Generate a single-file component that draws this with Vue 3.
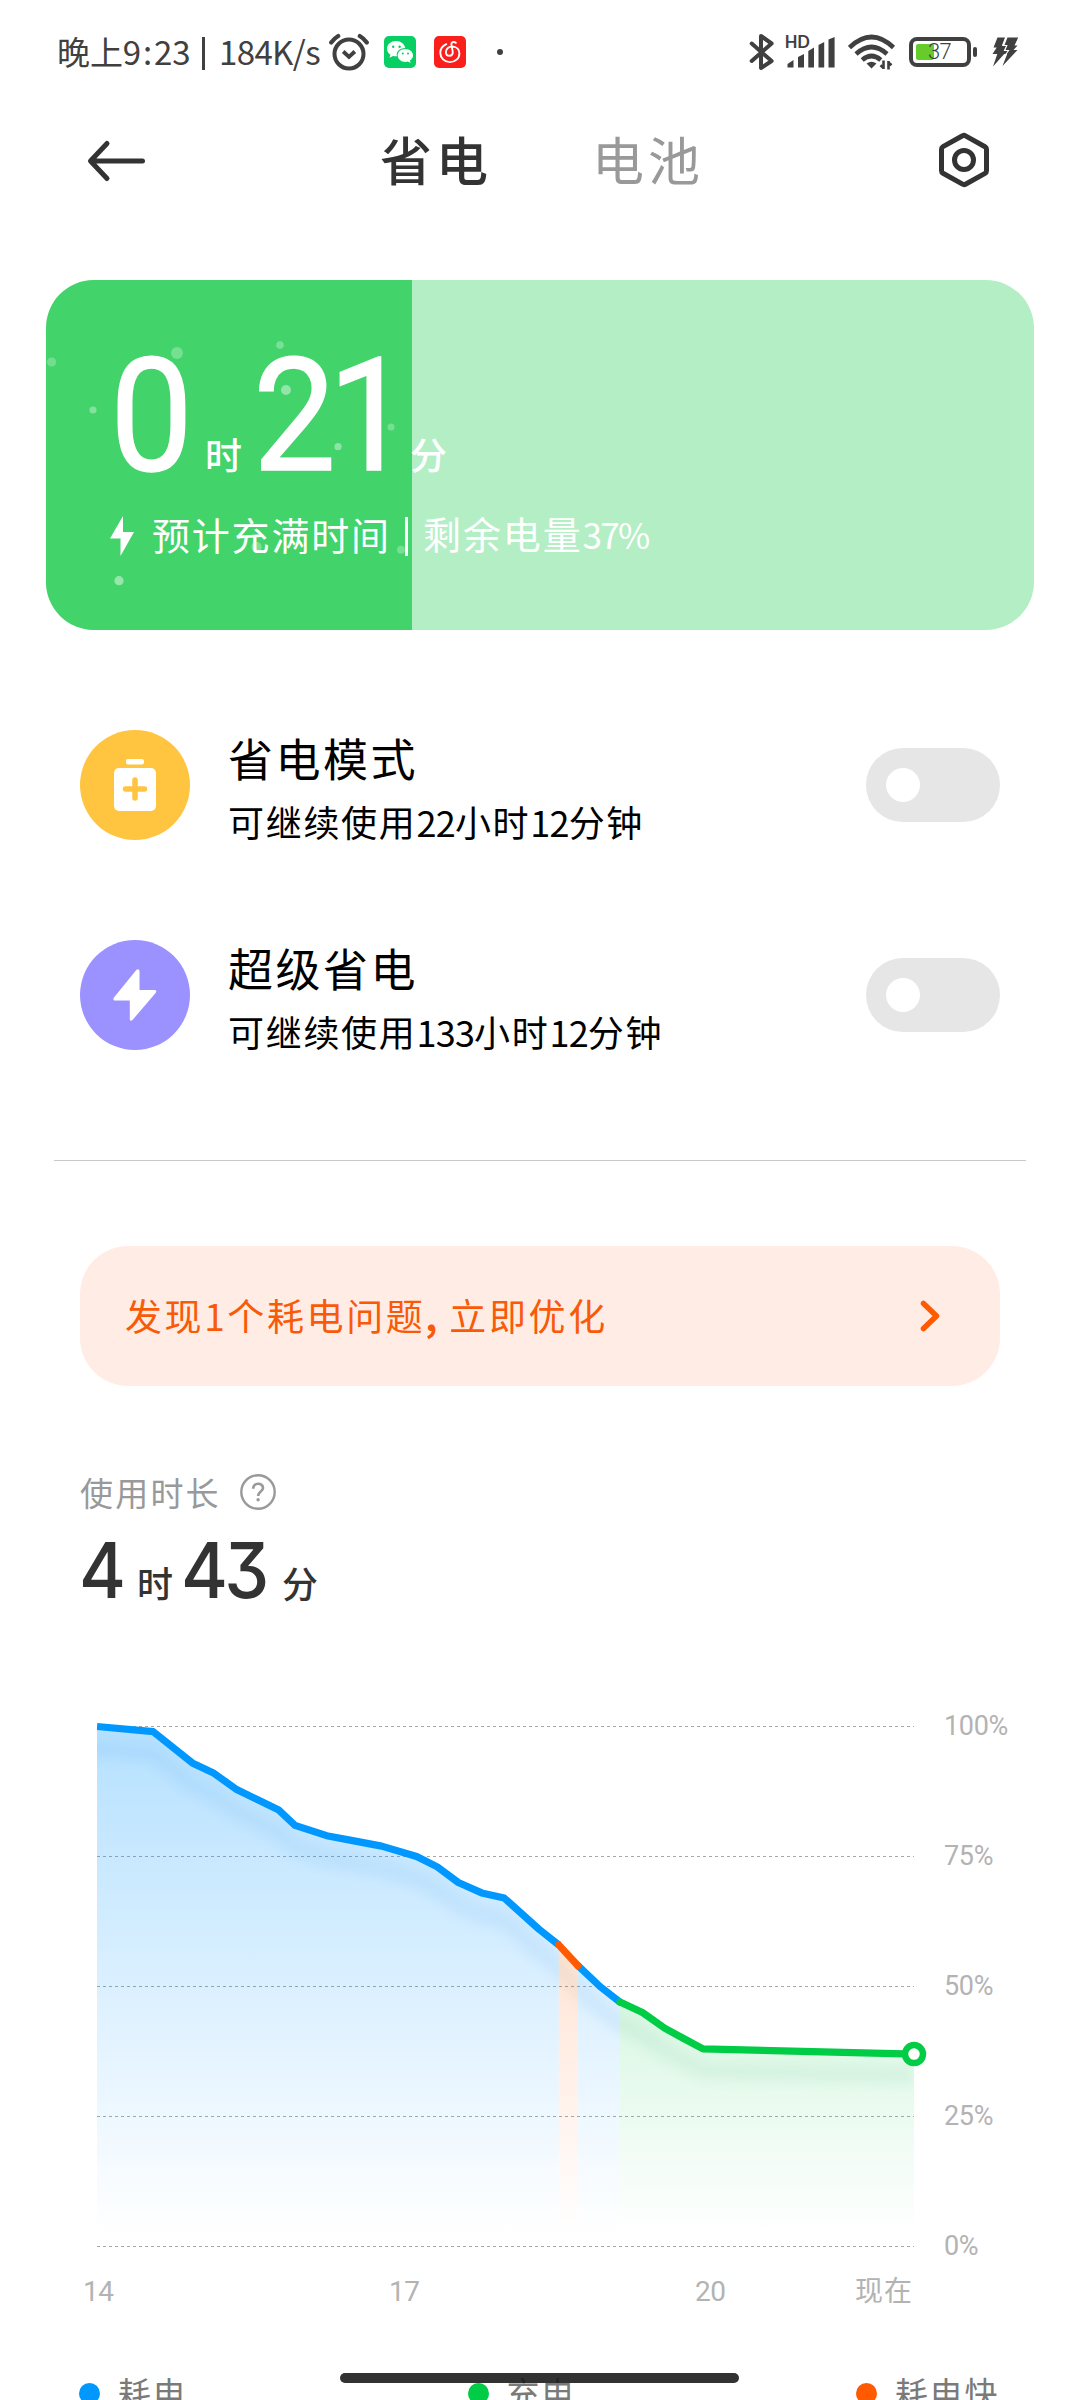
<script setup>
const LEFT = 97
const TOP = 26.5
const STEP = 5.2

const modes = [
  { key: 'saver', title: '省电模式', note: ['可继续使用', '22', '小时', '12', '分钟'] },
  { key: 'super', title: '超级省电', note: ['可继续使用', '133', '小时', '12', '分钟'] },
]

const bubbles = [
  [5.6, 82, 4.6, 0.25], [131, 73, 6, 0.27], [234, 65, 3.8, 0.3], [240, 110, 5, 0.42],
  [47, 130, 3.6, 0.35], [292, 166.7, 3.6, 0.4], [345, 147, 3.6, 0.27],
  [73, 300.7, 4.6, 0.45], [210.5, 267, 5.2, 0.3], [355, 269.7, 4, 0.27],
]

const levels = [100, 75, 50, 25, 0]
const segments = [
  {
    id: 'a', color: '#0097ff', shade: '#1482dc', alpha: 0.29,
    points: [[97, 100], [153.3, 99], [192.3, 93], [214, 91], [235.7, 88], [256.7, 86], [278.3, 84], [295, 81], [326.7, 79], [354, 78], [381.7, 77], [416.7, 75], [437.3, 73], [458.3, 70], [481.7, 68], [504.3, 67], [539, 61], [558.7, 58]],
  },
  { id: 'c', color: '#0097ff', shade: '#1482dc', alpha: 0.29, points: [[578, 54], [600, 50], [620, 47]] },
  { id: 'b', color: '#ff5a00', shade: '#5a8a50', alpha: 0.29, points: [[558.7, 58], [578, 54]] },
  { id: 'd', color: '#00cc46', shade: '#28a064', alpha: 0.33, points: [[620, 47], [642.5, 45], [664.6, 42], [683.6, 40], [703, 38], [914, 37]] },
]
const y = (v) => TOP + (100 - v) * STEP
const toPath = (pts) => pts.map(([px, v], i) => `${i ? 'L' : 'M'}${px - LEFT} ${y(v)}`).join(' ')
const toArea = (pts) => `${toPath(pts)} L${pts[pts.length - 1][0] - LEFT} ${y(0)} L${pts[0][0] - LEFT} ${y(0)} Z`
const bridge = [segments[0].points.at(-1), segments[1].points[0]]
const whole = toPath([[60, 100], ...segments[0].points, ...bridge, ...segments[1].points, ...segments[3].points])
</script>

<template>
  <div class="screen">
    <header class="status">
      <span class="clock">晚上9<i class="colon">:</i>23<i class="bar"></i><span class="speed">184K/s</span></span>
      <svg class="alarm" width="40" height="40" viewBox="0 0 40 40" fill="none" stroke="#404040" stroke-linecap="round">
        <circle cx="20" cy="22" r="14.500" stroke-width="4" />
        <path d="M14.200 19.500l5.800 5.500 5.800-5.500" stroke-width="3.800" stroke-linecap="butt" />
        <path d="M2.200 10.500Q5 6.500 9.200 4M37.800 10.500Q35 6.500 30.800 4" stroke-width="4.200" />
      </svg>
      <svg class="wechat" width="32" height="32" viewBox="0 0 32 32">
        <rect width="32" height="32" rx="5" fill="#06cf63" />
        <path fill="#fff" d="M12.300 5C7 5 3 8.400 3 12.700c0 2.500 1.300 4.600 3.400 6l-.9 3 3.500-1.800c1.100.3 2.200.4 3.300.4h.7c-1.400-4.700 2.800-8.400 8.300-8.300C20.500 7.900 16.700 5 12.300 5z" />
        <path fill="#fff" d="M29 19.500c0-3.600-3.500-6.400-7.700-6.400s-7.600 2.800-7.600 6.400 3.400 6.400 7.600 6.400c.9 0 1.800-.1 2.600-.4l2.700 1.400-.7-2.400c1.900-1.200 3.100-3 3.100-5z" />
        <g fill="#06cf63"><circle cx="9.200" cy="10.700" r="1.200" /><circle cx="15.600" cy="10.700" r="1.200" /><circle cx="18.800" cy="17.500" r="1" /><circle cx="24" cy="17.500" r="1" /></g>
      </svg>
      <svg class="music" width="32" height="32" viewBox="0 0 32 32">
        <rect width="32" height="32" rx="5" fill="#fb1f1c" />
        <path d="M12.300 8.200C8.500 9.900 6.300 13 6.300 16.800c0 5.300 4.100 9.300 9.500 9.300s9.600-3.700 9.600-8.700c0-3.700-2.600-6.500-6.500-6.800-4.100-.3-7 2.200-7 5.300 0 2.300 1.500 3.900 3.600 3.900 2.300 0 3.600-1.800 3.200-4.100L17.400 8.700c-.4-2.300 2.200-3.700 4.400-1.900" fill="none" stroke="#fff" stroke-width="1.900" stroke-linecap="round" />
      </svg>
      <i class="more"></i>
      <svg class="bt" width="26" height="40" viewBox="0 0 26 40" fill="none" stroke="#404040" stroke-width="4" stroke-linejoin="round" stroke-linecap="round">
        <path d="M2.700 11.500L22.600 29 12 36V4l10.600 7.500L2.700 29" />
      </svg>
      <svg class="signal" width="52" height="36" viewBox="0 0 52 36">
        <text x="-.2" y="14.500" font-size="16.500" font-weight="700" textLength="25">HD</text>
        <path fill="#404040" d="M2.500 34.500v-3.500l6-4v7.500zM13 34.500V24l6-3v13.500zM23.300 34.500V18l5.700-3.500v20zM33.500 34.500V12l5.700-3v25.500zM43.500 34.500V6.500L49.600 4v30.500z" />
      </svg>
      <svg class="wifi" width="48" height="38" viewBox="0 0 48 38" fill="none" stroke="#404040" stroke-width="4.600">
        <path d="M1.500 14.500Q23.500-6.500 45.500 14.500M8 21Q23.500 7 39 21M14.200 27Q23.500 19 32.800 27" />
        <path d="M18.500 30.500Q23.500 27 28.500 30.500L23.500 35.500z" fill="#404040" stroke="none" />
        <path d="M35.500 27.500v8.500M40.500 36.500V28M35.500 35l-3-2.800M40.500 29.500l3 2.800" stroke-width="2.600" />
      </svg>
      <div class="battery"><i class="charge"></i><span>37</span><i class="nub"></i></div>
      <svg class="flash" width="28" height="30" viewBox="0 0 28 30" fill="#404040">
        <path d="M6.500.500H14L11 8.500h3.800L13.500 13h3.300L2 29.500 6.300 17H1.500L5.700 10.500H2.500zM16.500.500h10.700L23.500 8.500h3L22.500 13h4L11.500 29l4.700-12h-4L15.500 10.500h-3z" />
        <path d="M15.300 0L11.800 8.500h4L13.500 13.500h4L8.500 26" stroke="#fff" stroke-width="1.100" fill="none" />
      </svg>
    </header>

    <nav class="tabs">
      <svg class="back" width="60" height="44" viewBox="0 0 60 44" fill="none" stroke="#333" stroke-width="5" stroke-linecap="round" stroke-linejoin="round"><path d="M22 4.500L5.500 22 22 39.500M6 22H57.500" /></svg>
      <span class="tab on">省电</span>
      <span class="tab">电池</span>
      <svg class="gear" width="52" height="56" viewBox="0 0 52 56" fill="none" stroke="#333" stroke-width="5" stroke-linejoin="round">
        <path d="M24.500 3.800a3 3 0 0 1 3 0L47 14.700a3 3 0 0 1 1.500 2.600v21.400a3 3 0 0 1-1.500 2.600L27.500 52.200a3 3 0 0 1-3 0L5 41.300a3 3 0 0 1-1.500-2.600V17.300A3 3 0 0 1 5 14.700z" />
        <circle cx="26" cy="28" r="9.500" />
      </svg>
    </nav>

    <section class="card">
      <i class="level"></i>
      <svg class="bubbles" width="988" height="350" fill="#fff">
        <circle v-for="(b, i) in bubbles" :key="i" :cx="b[0]" :cy="b[1]" :r="b[2]" :opacity="b[3]" />
      </svg>
      <div class="time"><b class="zero">0</b><span class="hour">时</span><b class="mins">21</b><span class="min">分</span></div>
      <div class="left">
        <svg width="24" height="40" viewBox="0 0 24 40" fill="#fff"><path d="M13 0L0 22.500h10.500V40L24 16H13z" /></svg>
        <span class="l1">预计充满时间</span><i></i><span class="l2">剩余电量<em>37%</em></span>
      </div>
    </section>

    <section class="modes">
      <div v-for="m in modes" :key="m.key" class="mode">
        <div class="badge" :class="m.key">
          <svg v-if="m.key === 'saver'" width="42" height="52" viewBox="0 0 42 52">
            <rect x="12" width="18" height="5.500" rx="2" fill="#fff" />
            <rect y="9" width="42" height="43" rx="5" fill="#fff" />
            <path d="M21 21v18M11.500 30h19" stroke="#ffc440" stroke-width="5.500" stroke-linecap="round" />
          </svg>
          <svg v-else width="44" height="52" viewBox="0 0 44 52"><path d="M23.500.800Q26-1 26.500 2V21H42q2 .500 1 2.500L19.500 51q-2.300 2-2.700-.800V31.500H1.500Q-.4 31 .8 28.700z" fill="#fff" /></svg>
        </div>
        <div class="words">
          <div class="title">{{ m.title }}</div>
          <div class="note"><span v-for="(t, i) in m.note" :key="i" :class="{ num: i % 2 }">{{ t }}</span></div>
        </div>
        <div class="switch"><i></i></div>
      </div>
    </section>

    <hr class="rule" />

    <section class="issue">
      <span>发现1个耗电问题<i>,</i>立即优化</span>
      <svg width="20" height="34" viewBox="0 0 20 34" fill="none" stroke="#ff5a00" stroke-width="5.500" stroke-linecap="round" stroke-linejoin="round"><path d="M3.500 4.500L16.500 17 3.500 29.500" /></svg>
    </section>

    <section class="usage">
      <div class="label">使用时长
        <svg width="38" height="38" viewBox="0 0 38 38" fill="none" stroke="#999"><circle cx="19" cy="19" r="16.700" stroke-width="2.400" /><path d="M14.200 15.700c0-6.600 9.800-6.400 9.800-.7 0 3.700-4.900 3.500-4.900 8" stroke-width="2.700" /><circle cx="19.100" cy="26.800" r="1.700" fill="#999" stroke="none" /></svg>
      </div>
      <div class="total"><b class="n1">4</b><span class="h">时</span><b class="n2">43</b><span>分</span></div>
    </section>

    <section class="chart">
      <svg class="plot" width="835" height="560">
        <defs>
          <linearGradient v-for="s in segments" :id="'g' + s.id" :key="s.id" gradientUnits="userSpaceOnUse" x1="0" :y1="y(100)" x2="0" :y2="y(2)">
            <stop offset="0" :stop-color="s.color" :stop-opacity="s.alpha" />
            <stop offset="1" :stop-color="s.color" stop-opacity="0" />
          </linearGradient>
          <clipPath v-for="s in segments" :id="'c' + s.id" :key="s.id"><path :d="toArea(s.points)" /></clipPath>
          <filter id="soft" filterUnits="userSpaceOnUse" x="-60" y="0" width="940" height="500"><feGaussianBlur stdDeviation="7" /></filter>
        </defs>
        <path v-for="l in levels" :key="l" :d="`M0 ${y(l)}H817`" stroke="#a8a8a8" stroke-width="1" stroke-dasharray="3 3" />
        <g v-for="s in segments" :key="s.id">
          <path :d="toArea(s.points)" :fill="`url(#g${s.id})`" />
          <g :clip-path="`url(#c${s.id})`">
            <path :d="whole" transform="translate(0 22)" fill="none" :stroke="s.shade" stroke-width="14" opacity=".09" filter="url(#soft)" />
          </g>
        </g>
        <path v-for="s in segments" :key="s.id" :d="toPath(s.points)" fill="none" :stroke="s.color" stroke-width="7.200" stroke-linejoin="round" :stroke-linecap="s.id === 'a' ? 'butt' : 'round'" />
        <circle cx="817" :cy="y(37)" r="9" fill="#fff" stroke="#00cc46" stroke-width="6.500" />
      </svg>
      <div class="levels"><span v-for="l in levels" :key="l">{{ l }}%</span></div>
    </section>
    <div class="hours"><span>14</span><span>17</span><span>20</span><span class="now">现在</span></div>

    <footer class="legend">
      <span class="blue">耗电</span><span class="green">充电</span><span class="orange">耗电快</span>
    </footer>
    <i class="home"></i>
  </div>
</template>

<style>
body { background: #fff; }
</style>

<style scoped>
* { box-sizing: border-box; }
i, em { font-style: normal; }
svg { display: block; flex: none; }
.screen {
  position: relative; width: 1080px; height: 2400px; overflow: hidden; background: #fff;
  display: flex; flex-direction: column; color: #000; white-space: nowrap;
  font-family: "Noto Sans CJK SC", "Noto Sans", sans-serif;
}
.status { height: 104px; flex: none; display: flex; align-items: center; color: #404040; padding-left: 57px; }
.clock { width: 272px; font-size: 33px; line-height: 40px; letter-spacing: -.1px; margin-top: -2px; display: flex; align-items: center; }
.speed { letter-spacing: -.6px; }
.colon { width: 13px; text-align: center; }
.bar { width: 2.500px; height: 33px; background: #404040; margin: 4px 14px 0 12px; }
.alarm { margin-right: 15px; }
.wechat { margin-right: 18px; }
.music { margin-right: 31px; }
.more { width: 6px; height: 6px; border-radius: 50%; background: #404040; margin-right: 246px; }
.bt { margin-right: 10px; }
.signal { margin: -2px 11px 0 0; fill: #404040; font-family: Lato, sans-serif; }
.wifi { margin-right: 13px; }
.battery { position: relative; width: 62px; height: 30px; border: 4px solid #404040; border-radius: 8px; margin-right: 20px; flex: none; }
.charge { position: absolute; left: 3px; top: 3px; width: 18px; height: 16px; background: #66cc29; border-radius: 2px; }
.battery span { position: absolute; left: 15px; top: -1px; font: 300 22px/24px Roboto, sans-serif; letter-spacing: -.8px; }
.nub { position: absolute; right: -10px; top: 6px; width: 4px; height: 10px; border-radius: 2px; background: #404040; }

.tabs { height: 176px; flex: none; padding: 28px 0 0 85px; display: flex; align-items: flex-start; }
.back { margin: 6.500px 235px 0 0; }
.tab { width: 212px; font-size: 52px; line-height: 56px; letter-spacing: 4px; color: #999; margin-top: -1px; }
.tab.on { color: #333; font-weight: 500; }
.gear { margin-left: 134px; }

.card { position: relative; height: 350px; width: 988px; margin-left: 46px; flex: none; background: #b4eec5; border-radius: 48px; overflow: hidden; color: #fff; }
.level { position: absolute; inset: 0 auto 0 0; width: 37%; background: #42d36a; }
.bubbles { position: absolute; inset: 0; }
.time { position: relative; height: 150px; margin-top: 61px; padding-left: 64px; display: flex; align-items: baseline; font-size: 37px; font-weight: 500; line-height: 150px; }
.time b { font: 400 157px/150px Roboto, sans-serif; transform: scaleX(.94); transform-origin: left; -webkit-text-stroke: 1.500px #fff; }
.zero { width: 95px; }
.hour { width: 48px; }
.mins { width: 157px; letter-spacing: -8.500px; }
.left { position: relative; display: flex; align-items: center; padding-left: 64px; margin-top: 23px; height: 44px; font-size: 38px; line-height: 44px; }
.left i { width: 3px; height: 39px; background: #fff; }
.l1 { margin-left: 18px; width: 253px; letter-spacing: 1.800px; margin-top: -5px; }
.l2 { margin: -5px 0 0 15px; letter-spacing: 1.900px; }
.l2 em { font-size: 35px; letter-spacing: -1.700px; }

.modes { display: flex; flex-direction: column; gap: 100px; padding: 100px 80px 0; flex: none; }
.mode { height: 110px; display: flex; align-items: center; }
.badge { width: 110px; height: 110px; border-radius: 50%; display: flex; align-items: center; justify-content: center; }
.saver { background: #ffc440; }
.super { background: #9c92ff; }
.words { flex: 1; padding-left: 38px; }
.title { font-size: 45px; line-height: 60px; letter-spacing: 2.500px; margin-top: 4px; }
.note { font-size: 36px; line-height: 50px; letter-spacing: 1.700px; margin-top: 8px; }
.num { letter-spacing: -.8px; }
.switch { width: 134px; height: 74px; border-radius: 37px; background: #e6e6e6; padding: 20px; }
.switch i { display: block; width: 34px; height: 34px; border-radius: 50%; background: #fff; }
.rule { width: 972px; height: 1px; margin: 110px 0 0 54px; border: 0; background: #c8c8c8; flex: none; }

.issue { margin: 85px 80px 0; height: 140px; flex: none; border-radius: 48px; background: #ffede5; color: #f95a08; display: flex; align-items: center; justify-content: space-between; padding: 0 60px 0 45px; font-size: 37px; letter-spacing: 2.600px; }
.issue span { margin-top: -3px; }
.issue i { display: inline-block; width: 24px; font-weight: 700; }

.usage { padding: 86px 80px 0; height: 250px; flex: none; }
.label { display: flex; align-items: center; height: 40px; color: #999; font-size: 33px; line-height: 40px; letter-spacing: 2.200px; }
.label svg { margin: 0 0 0 18px; }
.total { display: flex; align-items: baseline; height: 80px; line-height: 80px; margin-top: 18px; color: #333; font-size: 36px; font-weight: 500; }
.total b { font: 450 77px/80px Inter, sans-serif; font-feature-settings: "cv09"; letter-spacing: -4px; transform: scaleX(.93); transform-origin: left; }
.total .n1 { width: 58px; margin-left: -1px; }
.total .h { width: 44px; }
.total .n2 { width: 101px; }

.chart { display: flex; height: 560px; margin: 64px 0 0 97px; flex: none; }
.levels { padding-left: 12px; display: flex; flex-direction: column; color: #b3b3b3; font: 400 27px/40px Roboto, sans-serif; letter-spacing: -.3px; gap: 90px; margin-top: 6px; }
.hours { height: 40px; margin-top: 12px; display: flex; color: #b3b3b3; font-size: 28px; line-height: 40px; padding-left: 83px; flex: none; }
.hours span { width: 306px; font-family: Roboto, sans-serif; letter-spacing: -.5px; }
.hours span:nth-child(3) { width: 160px; }
.hours .now { width: auto; font-family: "Noto Sans CJK SC", sans-serif; letter-spacing: 1px; margin-top: -3px; }
.legend { display: flex; flex: none; padding-left: 79px; margin-top: 58px; color: #7a7a7a; font-size: 33px; line-height: 44px; letter-spacing: 1.800px; }
.legend span { width: 388.500px; display: flex; align-items: center; flex: none; }
.legend span::before { content: ""; width: 21px; height: 21px; border-radius: 50%; background: #0097ff; margin: 2px 18px 0 0; }
.legend .green::before { background: #00cc46; }
.legend .orange::before { background: #ff5a00; }
.home { position: absolute; left: 340px; top: 2373px; width: 399px; height: 10px; border-radius: 5px; background: rgba(25, 25, 25, .89); }
</style>
